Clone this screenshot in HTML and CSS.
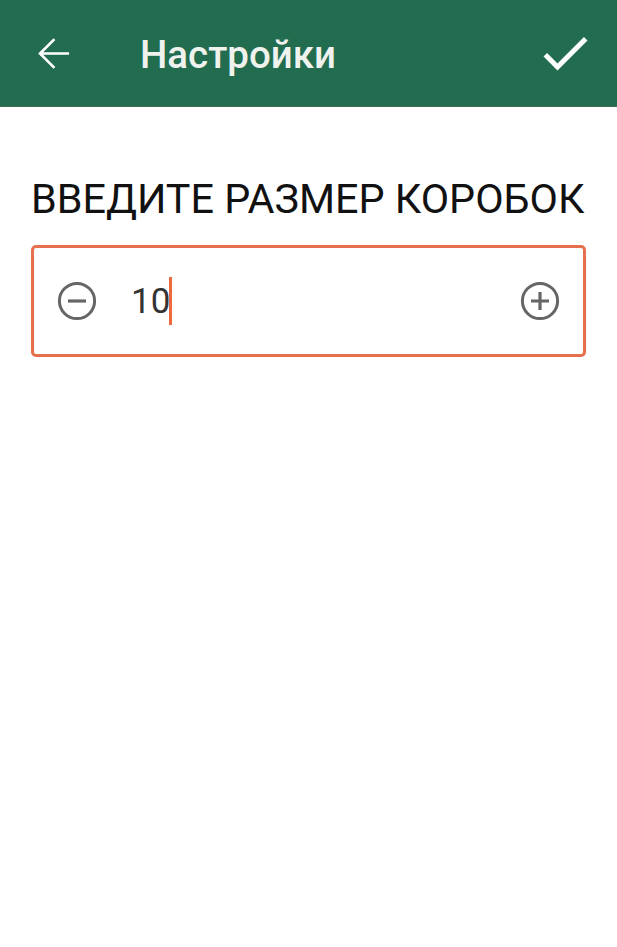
FILE: index.html
```html
<!DOCTYPE html>
<html lang="ru">
<head>
<meta charset="utf-8">
<title>Настройки</title>
<link rel="stylesheet" href="styles.css">
</head>
<body>
<header class="toolbar">
  <button class="tb-btn back" aria-label="Назад">
    <svg viewBox="0 0 24 24" width="45" height="45"><path d="M19.6 12H5.2M12 4.8L4.8 12l7.2 7.2" fill="none" stroke="#fff" stroke-width="1.4" stroke-linecap="square"/></svg>
  </button>
  <h1 class="tb-title">Настройки</h1>
  <button class="tb-btn ok" aria-label="Готово">
    <svg viewBox="0 0 24 24" width="60" height="60"><path d="M9 16.17L4.83 12l-1.42 1.41L9 19 21 7l-1.41-1.41z" fill="#fff"/></svg>
  </button>
</header>
<main class="content">
  <p class="field-label">ВВЕДИТЕ РАЗМЕР КОРОБОК</p>
  <div class="stepper">
    <button class="step-btn" aria-label="Меньше">
      <svg viewBox="0 0 24 24" width="48" height="48"><circle cx="12" cy="12" r="8.8" fill="none" stroke="#666" stroke-width="1.5"/><path d="M7.5 12h9" stroke="#666" stroke-width="1.6"/></svg>
    </button>
    <div class="value">10<span class="caret"></span></div>
    <button class="step-btn" aria-label="Больше">
      <svg viewBox="0 0 24 24" width="48" height="48"><circle cx="12" cy="12" r="8.8" fill="none" stroke="#666" stroke-width="1.5"/><path d="M7.5 12h9M12 7.5v9" stroke="#666" stroke-width="1.6"/></svg>
    </button>
  </div>
</main>
</body>
</html>
```
FILE: styles.css
```css
* { box-sizing: border-box; }
html, body { margin: 0; padding: 0; background: #fff; }
body { font-family: Roboto, "Noto Sans", sans-serif; }

.toolbar {
  height: 107px;
  background: #226d50;
  border-bottom: 1px solid #3c6e5a;
  display: flex;
  align-items: center;
}
.tb-btn {
  background: none;
  border: 0;
  padding: 0;
  display: flex;
  cursor: pointer;
}
.back { margin-left: 31px; }
.tb-title {
  margin: 0 0 0 64px;
  flex: 1;
  color: #f0f2ee;
  font-size: 38.5px;
  font-weight: 500;
  line-height: 44px;
  padding-top: 4px;
}
.ok { margin-right: 22px; }

.content { padding: 0 31px; }
.field-label {
  margin: 68px 0 21px;
  font-size: 41.3px;
  line-height: 49px;
  color: #111;
  white-space: nowrap;
}
.stepper {
  height: 112px;
  border: 3px solid #e6704d;
  border-radius: 5px;
  display: flex;
  align-items: center;
  padding: 0 19px;
}
.step-btn {
  background: none;
  border: 0;
  padding: 0;
  display: flex;
  cursor: pointer;
}
.value {
  flex: 1;
  margin-left: 30px;
  font-size: 35px;
  color: #333;
  display: flex;
  align-items: center;
}
.caret {
  display: inline-block;
  width: 3px;
  height: 48px;
  background: #f0683e;
  margin-left: -1px;
}
```
